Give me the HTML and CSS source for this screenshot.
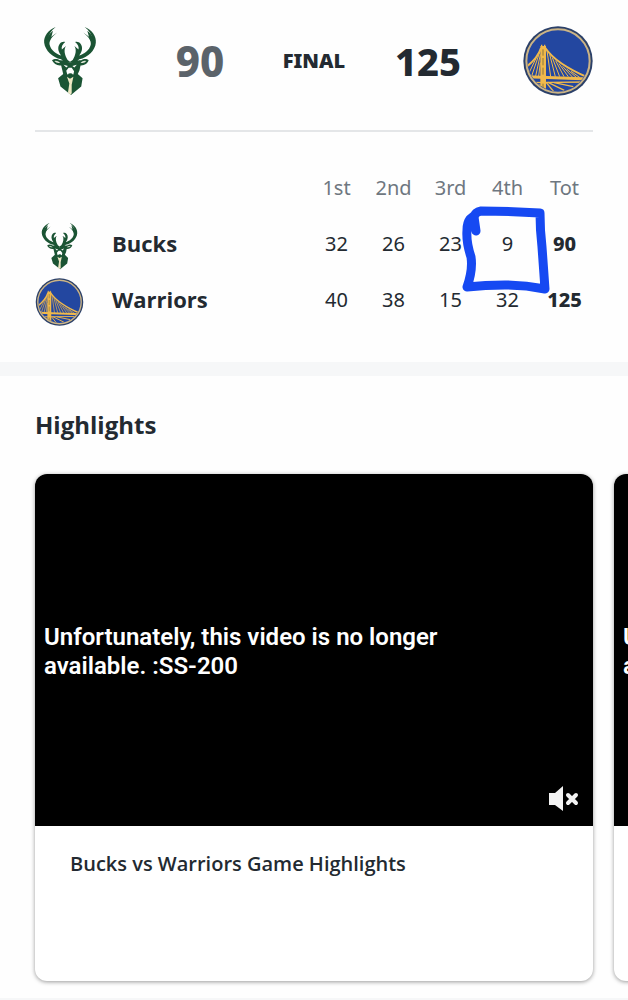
FILE: index.html
```html
<!DOCTYPE html>
<html lang="en">
<head>
<meta charset="utf-8">
<meta name="viewport" content="width=device-width, initial-scale=1">
<title>Bucks vs Warriors</title>
<link rel="stylesheet" href="styles.css">
</head>
<body>
<svg class="sprite" aria-hidden="true">
  <symbol id="bucks" viewBox="40 50 156 206">
    <g fill="#1b5434">
      <path d="M92 148C66 142 45 122 42 99C40 80 54 62 76 53C62 64 55 76 54 88L80 69C64 82 56 94 58 105C62 122 78 132 92 137C82 124 81 111 88 102C92 97 98 95 104 97C96 103 92 111 94 119L106 109C99 120 102 135 111 150L118 155L126 150C135 135 138 120 131 109L143 119C145 111 141 103 133 97C139 95 145 97 149 102C156 111 155 124 145 137C159 132 175 122 179 105C181 94 173 82 157 69L183 88C182 76 175 64 161 53C183 62 196 80 194 99C192 122 171 142 145 148L135 158H102Z"/>
      <path d="M50 111C45 91 54 75 68 64L62 86C54 96 54 105 61 120ZM187 111C192 91 183 75 169 64L175 86C183 96 183 105 176 120Z"/>
      <path d="M92 151L118 158L145 151L151 151C158 145 168 146 173 150C170 160 160 167 149 166L146 180L141 191L155 204L151 228L121 253L90 228L83 204L98 191L92 166C80 168 70 161 65 151C72 145 82 146 88 151Z"/>
    </g>
    <path d="M72 153Q81 151 89 158Q79 161 72 153ZM166 153Q156 151 149 158Q160 161 166 153Z" fill="#dfe5d6"/>
    <path d="M99 164L112 168L107 172ZM138 164L125 168L131 172ZM114 173L123 173L130 183L128 193L119 190L110 193L107 182Z" fill="#fff"/>
    <path d="M113 190H125L119 197Z" fill="#1b5434"/>
    <path d="M109 199L118 205L128 199L123 223V248L119 252L112 246L116 219Z" fill="#eee8c5"/>
  </symbol>
  <symbol id="warriors" viewBox="39 32 210 210">
    <clipPath id="disc"><circle cx="144" cy="137" r="91"/></clipPath>
    <circle cx="144" cy="137" r="104" fill="#2b4069"/>
    <circle cx="144" cy="137" r="95" fill="#2347a0" stroke="#cbb486" stroke-width="6"/>
    <g clip-path="url(#disc)" fill="none" stroke="#f0b94b">
      <path d="M48 184L240 191" stroke-width="9"/>
      <path d="M48 202L235 200" stroke-width="4"/>
      <path d="M93 98Q83 128 50 154M106 98Q137 145 235 187" stroke-width="6"/>
      <path d="M90 108L65 182M91 118L77 182M91 142L86 182M83 119L53 181M111 106L122 184M119 117L136 184M127 127L149 184M137 136L162 184M147 145L175 184M158 153L187 185M170 161L199 186M183 168L210 187" stroke-width="3"/>
      <path d="M48 202L90 223M61 199L92 211M109 202L132 230M114 201L163 225M132 202L190 214" stroke-width="4"/>
      <path d="M91 92H108V230H91Z" fill="#f0b94b" stroke="none"/>
      <path d="M95 88V94M104 88V94" stroke-width="4"/>
      <path d="M99 102V121M99 128V150M99 157V178M99 205V218" stroke="#8b763e" stroke-width="3"/>
    </g>
  </symbol>
</svg>

<main class="page">
  <section class="game">
    <header class="scoreboard">
      <svg class="team-logo" role="img" aria-label="Bucks"><use href="#bucks"/></svg>
      <div class="scores">
        <span class="score losing">90</span>
        <span class="status">FINAL</span>
        <span class="score">125</span>
      </div>
      <svg class="team-logo" role="img" aria-label="Warriors"><use href="#warriors"/></svg>
    </header>
    <table class="linescore">
      <thead>
        <tr><td></td><th scope="col">1st</th><th scope="col">2nd</th><th scope="col">3rd</th><th scope="col">4th</th><th scope="col">Tot</th></tr>
      </thead>
      <tbody>
        <tr>
          <th scope="row"><div class="team"><svg class="row-logo" aria-hidden="true"><use href="#bucks"/></svg>Bucks</div></th>
          <td>32</td><td>26</td><td>23</td>
          <td class="marked">9<svg class="marker" viewBox="0 0 90 90" aria-hidden="true"><path d="M14 26L12 12Q13 7 19 6Q48 6 78 8Q78 25 80 42L83 84Q63 80 43 80Q23 80 5 82Q11 65 9 52Q4 37 5 25Q5 18 8 14L13 10"/></svg></td>
          <td class="total">90</td>
        </tr>
        <tr>
          <th scope="row"><div class="team"><svg class="row-logo" aria-hidden="true"><use href="#warriors"/></svg>Warriors</div></th>
          <td>40</td><td>38</td><td>15</td><td>32</td>
          <td class="total">125</td>
        </tr>
      </tbody>
    </table>
  </section>

  <section class="highlights">
    <h2 class="heading">Highlights</h2>
    <div class="carousel">
      <article class="card">
        <div class="video">
          <p class="message">Unfortunately, this video is no longer available. :SS-200</p>
          <button class="mute" type="button" aria-label="Unmute">
            <svg class="mute-icon" viewBox="0 0 30 26" aria-hidden="true"><path d="M0 7H6L14 0V25L6 19H0Z" fill="#f2f2f2"/><path d="M19 9L27 17M27 9L19 17" stroke="#f2f2f2" stroke-width="4" stroke-linecap="round"/></svg>
          </button>
        </div>
        <h3 class="title">Bucks vs Warriors Game Highlights</h3>
      </article>
      <article class="card">
        <div class="video">
          <p class="message">Unfortunately, this video is no longer available. :SS-200</p>
        </div>
      </article>
    </div>
  </section>
</main>
</body>
</html>
```
FILE: styles.css
```css
* {
  box-sizing: border-box;
}

body {
  margin: 0;
  background: #fefefe;
  color: #232a31;
  font-family: "Open Sans", "Noto Sans", sans-serif;
}

.sprite {
  position: absolute;
  width: 0;
  height: 0;
}

.page {
  overflow: hidden;
}

.game {
  padding: 0 35px 35px;
  border-bottom: 14px solid #f6f7f8;
}

.scoreboard {
  display: flex;
  align-items: center;
  gap: 38px;
  padding: 26px 0 34px;
  border-bottom: 2px solid #e4e6e8;
}

.team-logo {
  flex: none;
  width: 70px;
  height: 70px;
}

.scores {
  flex: 1;
  display: grid;
  grid-template-columns: repeat(3, 1fr);
  align-items: center;
  text-align: center;
}

.score {
  font: 800 38px/48px "Noto Sans", sans-serif;
}

.losing {
  color: #5b636a;
  font-size: 42px;
}

.status {
  font: 900 20px/28px "Noto Sans", sans-serif;
}

.linescore {
  width: 100%;
  margin-top: 27px;
  border-collapse: collapse;
  table-layout: fixed;
  font-family: "Noto Sans", sans-serif;
  font-size: 20px;
  text-align: center;
}

.linescore th,
.linescore td {
  width: 57px;
  height: 56px;
  padding: 0;
  font-weight: 400;
}

.linescore thead th {
  color: #6e7780;
}

.linescore th:first-child,
.linescore td:first-child {
  width: auto;
}

.team {
  display: flex;
  align-items: center;
  gap: 28px;
  font-family: "Open Sans", sans-serif;
  font-size: 22px;
  font-weight: 700;
}

.row-logo {
  width: 49px;
  height: 48px;
  margin-top: 6px;
}

.linescore .total {
  font-weight: 800;
}

.marked {
  position: relative;
}

.marker {
  position: absolute;
  top: -10px;
  left: -17px;
  width: 90px;
  height: 90px;
  fill: none;
  stroke: #1649f2;
  stroke-width: 9;
  stroke-linecap: round;
  stroke-linejoin: round;
}

.highlights {
  padding: 32px 35px 17px;
  border-bottom: 2px solid #f6f7f8;
}

.heading {
  margin: 0 0 32px;
  font-size: 24px;
  line-height: 34px;
}

.carousel {
  display: flex;
  gap: 21px;
}

.card {
  flex: none;
  width: 100%;
  min-height: 507px;
  overflow: hidden;
  border-radius: 12px;
  background: #fff;
  box-shadow: 0 1px 4px rgba(0, 0, 0, 0.4);
}

.video {
  position: relative;
  display: flex;
  align-items: center;
  height: 352px;
  padding: 4px 9px 0;
  background: #000;
}

.message {
  max-width: 420px;
  margin: 0;
  color: #fff;
  font: 600 24px/29px Roboto, sans-serif;
}

.mute {
  position: absolute;
  right: 14px;
  bottom: 14px;
  padding: 0;
  border: 0;
  background: none;
}

.mute-icon {
  display: block;
  width: 30px;
  height: 26px;
}

.title {
  margin: 0;
  padding: 24px 35px;
  font-size: 20px;
  font-weight: 600;
  line-height: 28px;
}
```
